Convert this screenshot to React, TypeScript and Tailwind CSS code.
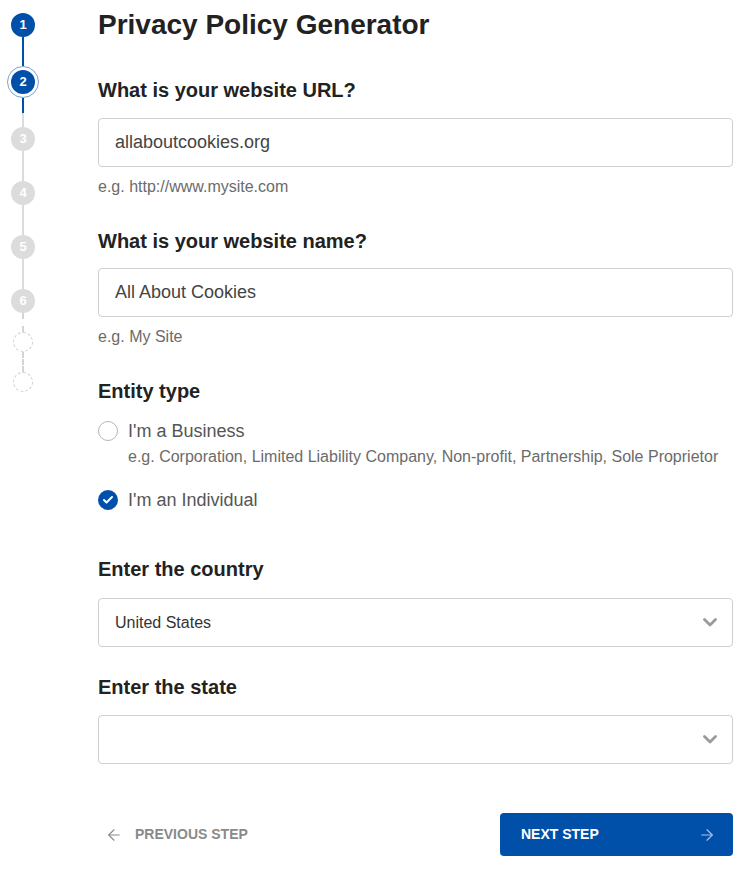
import { ArrowLeft, ArrowRight, Check } from "lucide-react";

function Step({ n, state }: { n: number; state: "done" | "current" | "todo" }) {
  if (state === "current") {
    return (
      <div className="flex h-8 w-8 items-center justify-center rounded-full border border-[#7aa3d6]">
        <div className="flex h-6 w-6 items-center justify-center rounded-full bg-[#0050aa] text-[13px] font-bold text-white">
          {n}
        </div>
      </div>
    );
  }
  return (
    <div
      className={
        state === "done"
          ? "flex h-6 w-6 items-center justify-center rounded-full bg-[#0050aa] text-[13px] font-bold text-white"
          : "flex h-6 w-6 items-center justify-center rounded-full bg-[#dcdcdc] text-[13px] font-bold text-white"
      }
    >
      {n}
    </div>
  );
}

function Stepper() {
  return (
    <div className="flex w-[46px] shrink-0 flex-col items-center pt-[13px]">
      <Step n={1} state="done" />
      <div className="h-[29px] w-[2px] bg-[#0050aa]" />
      <Step n={2} state="current" />
      <div className="h-[15px] w-[2px] bg-[#0050aa]" />
      <div className="h-[14px] w-[2px] bg-[#dcdcdc]" />
      <Step n={3} state="todo" />
      <div className="h-[30px] w-[2px] bg-[#dcdcdc]" />
      <Step n={4} state="todo" />
      <div className="h-[30px] w-[2px] bg-[#dcdcdc]" />
      <Step n={5} state="todo" />
      <div className="h-[30px] w-[2px] bg-[#dcdcdc]" />
      <Step n={6} state="todo" />
      <div className="h-[19px] w-0 border-l-2 border-dashed border-[#d4d4d4]" />
      <div className="h-5 w-5 rounded-full border border-dashed border-[#c8c8c8]" />
      <div className="h-[20px] w-0 border-l-2 border-dashed border-[#d4d4d4]" />
      <div className="h-5 w-5 rounded-full border border-dashed border-[#c8c8c8]" />
    </div>
  );
}

function Heading({ children, className = "" }: { children: React.ReactNode; className?: string }) {
  return <h2 className={`text-[20px] font-bold leading-6 text-[#222] ${className}`}>{children}</h2>;
}

function TextField({ value }: { value: string }) {
  return (
    <div className="flex h-[49px] items-center rounded border border-[#cfcfcf] px-4 text-[18px] text-[#444]">
      {value}
    </div>
  );
}

function SelectField({ value }: { value?: string }) {
  return (
    <div className="flex h-[49px] items-center justify-between rounded border border-[#cfcfcf] pl-4 pr-[15px] text-[16px] text-[#333]">
      <span>{value}</span>
      <svg width="14" height="9" viewBox="0 0 14 9" fill="none" className="text-[#9a9a9a]">
        <path d="M1.5 1.5 L7 7 L12.5 1.5" stroke="currentColor" strokeWidth="2.8" strokeLinecap="round" strokeLinejoin="round" />
      </svg>
    </div>
  );
}

export default function App() {
  return (
    <div className="flex min-h-[870px] bg-white font-[Liberation_Sans,Arial,sans-serif]">
      <Stepper />
      <div className="ml-[52px] flex-1 pr-[19px]">
        <h1 className="mt-[8px] text-[28px] font-bold leading-[34px] text-[#222]">
          Privacy Policy Generator
        </h1>

        <Heading className="mt-[36px]">What is your website URL?</Heading>
        <div className="mt-[16px]">
          <TextField value="allaboutcookies.org" />
        </div>
        <p className="mt-[10px] text-[16px] leading-5 text-[#6b6b6b]">e.g. http://www.mysite.com</p>

        <Heading className="mt-[32px]">What is your website name?</Heading>
        <div className="mt-[15px]">
          <TextField value="All About Cookies" />
        </div>
        <p className="mt-[10px] text-[16px] leading-5 text-[#6b6b6b]">e.g. My Site</p>

        <Heading className="mt-[32px]">Entity type</Heading>
        <div className="mt-[16px] flex items-center gap-[10px]">
          <div className="h-5 w-5 rounded-full border border-[#b5b5b5]" />
          <span className="text-[18px] leading-6 text-[#555]">I'm a Business</span>
        </div>
        <p className="ml-[30px] mt-[4px] text-[16px] leading-5 text-[#6b6b6b]">
          e.g. Corporation, Limited Liability Company, Non-profit, Partnership, Sole Proprietor
        </p>
        <div className="mt-[21px] flex items-center gap-[10px]">
          <div className="flex h-5 w-5 items-center justify-center rounded-full bg-[#0050aa]">
            <Check size={12} strokeWidth={4} className="text-white" />
          </div>
          <span className="text-[18px] leading-6 text-[#555]">I'm an Individual</span>
        </div>

        <Heading className="mt-[45px]">Enter the country</Heading>
        <div className="mt-[17px]">
          <SelectField value="United States" />
        </div>

        <Heading className="mt-[28px]">Enter the state</Heading>
        <div className="mt-[16px]">
          <SelectField />
        </div>

        <div className="mt-[49px] flex items-center justify-between">
          <button className="flex items-center gap-[12px] pl-[7px] text-[14px] font-bold uppercase text-[#8a8a8a]">
            <ArrowLeft size={18} strokeWidth={1.5} />
            Previous step
          </button>
          <button className="flex h-[43px] w-[233px] items-center justify-between rounded bg-[#0050aa] pl-[21px] pr-[17px] text-[14px] font-bold uppercase text-white">
            Next step
            <ArrowRight size={18} strokeWidth={1.5} className="text-[#a9c3e6]" />
          </button>
        </div>
      </div>
    </div>
  );
}
